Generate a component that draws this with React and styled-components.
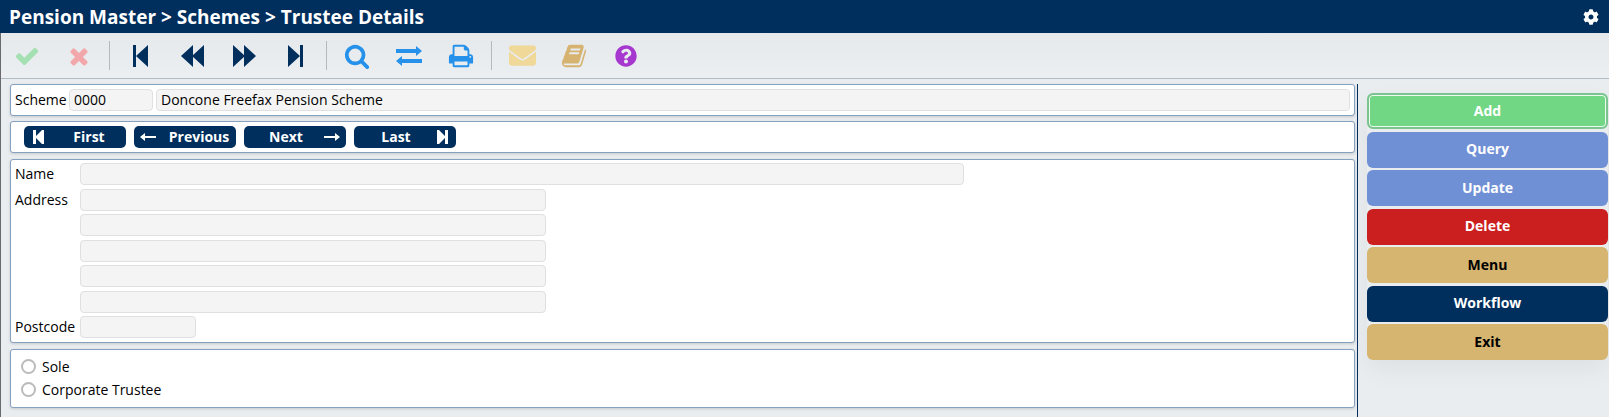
import React from "react";
import styled, { createGlobalStyle } from "styled-components";
import { FaCog, FaEnvelope, FaQuestionCircle } from "react-icons/fa";

const navy = "#002e5d";

const GlobalStyle = createGlobalStyle`
  *, *::before, *::after { box-sizing: border-box; }
  body { margin: 0; background: #e9edf0; color: #000; }
  body, button, input { font-family: "Open Sans", "Noto Sans", sans-serif; font-size: 14px; }
`;

const Page = styled.div`
  display: flex;
  flex-direction: column;
  min-height: 100vh;
`;

const Header = styled.header`
  display: flex;
  align-items: center;
  justify-content: space-between;
  height: 33px;
  padding: 0 10px 0 9px;
  background: ${navy};
  color: #fff;
`;

const Title = styled.h1`
  margin: 0;
  font-size: 19px;
  line-height: 24px;
  font-weight: 700;
`;

const IconButton = styled.button`
  display: flex;
  align-items: center;
  justify-content: center;
  width: ${(p) => p.$width}px;
  padding: 0;
  border: 0;
  background: none;
  color: ${(p) => p.$color};
  cursor: pointer;
`;

const Body = styled.div`
  flex: 1;
  display: flex;
  flex-direction: column;
  border-left: 1px solid #6a6a6c;
`;

const Toolbar = styled.div`
  display: flex;
  align-items: stretch;
  height: 46px;
  border-bottom: 1px solid #b3bcc3;
  background: linear-gradient(#e6e9eb, #ebeff2);
`;

const Divider = styled.span`
  width: 1px;
  margin: 8px 4px;
  background: #b5b9bc;
`;

const Columns = styled.div`
  flex: 1;
  display: flex;
  padding-top: 5px;
`;

const Main = styled.main`
  flex: 1;
  display: flex;
  flex-direction: column;
  gap: 6px;
  padding: 0 2px 8px 9px;
`;

const RecordBar = styled.div`
  display: flex;
  flex-direction: column;
  gap: 5px;
`;

const Panel = styled.section`
  display: flex;
  flex-direction: ${(p) => (p.$column ? "column" : "row")};
  align-items: ${(p) => (p.$column ? "stretch" : "center")};
  gap: ${(p) => p.$gap || 0}px;
  padding: ${(p) => p.$padding};
  border: 1px solid #86a0bf;
  border-radius: 3px;
  background: #fff;
  box-shadow: 0 1px 3px rgba(0, 0, 0, 0.15);
`;

const Label = styled.label`
  width: ${(p) => p.$width}px;
  line-height: 22px;
  white-space: nowrap;
`;

const Field = styled.input`
  width: ${(p) => (p.$width ? `${p.$width}px` : "auto")};
  flex: ${(p) => (p.$width ? "0 1 auto" : "1")};
  min-width: 0;
  height: ${(p) => p.$height || 22}px;
  padding: 0 4px 2px;
  border: 1px solid #e0e0e0;
  border-radius: 4px;
  background: #f4f4f4;
  color: #000;
`;

const NavButton = styled.button`
  display: flex;
  align-items: center;
  flex-direction: ${(p) => (p.$reverse ? "row-reverse" : "row")};
  gap: ${(p) => (p.$reverse ? 0 : 10)}px;
  width: 102px;
  height: 22px;
  padding: 0 5px;
  border: 0;
  border-radius: 5px;
  background: ${navy};
  color: #fff;
  font-weight: 700;
  cursor: pointer;
`;

const NavIcon = styled.span`
  display: flex;
  justify-content: center;
  width: 18px;
`;

const NavText = styled.span`
  flex: 1;
  display: flex;
  justify-content: center;
  line-height: 22px;
`;

const Form = styled.div`
  display: flex;
  flex-direction: column;
  justify-content: space-between;
  min-height: 175px;
`;

const FormRow = styled.div`
  display: flex;
  align-items: center;
`;

const Choice = styled.label`
  display: flex;
  align-items: center;
  gap: 6px;
  line-height: 23px;
`;

const Radio = styled.input`
  appearance: none;
  width: 15px;
  height: 15px;
  margin: 0;
  border: 2px solid #bbb;
  border-radius: 50%;
  background: #fff;

  &:checked { background: ${navy}; }
`;

const Sidebar = styled.aside`
  display: flex;
  flex-direction: column;
  width: 252px;
  padding: 9px 1px 0 9px;
  border-left: 1px solid ${navy};
`;

const Actions = styled.div`
  display: flex;
  flex-direction: column;
  justify-content: space-between;
  min-height: 267px;
  border-radius: 6px;
  box-shadow: 0 10px 24px rgba(0, 0, 0, 0.05);
`;

const ActionButton = styled.button`
  height: 36px;
  padding: 0 0 2px;
  border: ${(p) => (p.$active ? "2px solid #79c48f" : "0")};
  border-radius: 6px;
  background: ${(p) => p.$bg};
  color: ${(p) => p.$color || "#fff"};
  font-weight: 700;
  box-shadow: ${(p) => (p.$active ? "inset 0 0 0 1px #eefaf0" : "none")};
  cursor: pointer;
`;

const Glyph = ({ d, size = 26 }) => (
  <svg width={size} height={size} viewBox="0 0 1792 1792" fill="currentColor" aria-hidden="true">
    <path d={d} />
  </svg>
);

const CHECK = "M1671 566q0 40-28 68l-724 724-136 136q-28 28-68 28t-68-28l-136-136-362-362q-28-28-28-68t28-68l136-136q28-28 68-28t68 28l294 295 656-657q28-28 68-28t68 28l136 136q28 28 28 68z";
const TIMES = "M1490 1322q0 40-28 68l-136 136q-28 28-68 28t-68-28l-294-294-294 294q-28 28-68 28t-68-28l-136-136q-28-28-28-68t28-68l294-294-294-294q-28-28-28-68t28-68l136-136q28-28 68-28t68 28l294 294 294-294q28-28 68-28t68 28l136 136q28 28 28 68t-28 68l-294 294 294 294q28 28 28 68z";
const SEARCH = "M1216 832q0-185-131.5-316.5t-316.5-131.5-316.5 131.5-131.5 316.5 131.5 316.5 316.5 131.5 316.5-131.5 131.5-316.5zm512 832q0 52-38 90t-90 38q-54 0-90-38l-343-342q-179 124-399 124-143 0-273.5-55.5t-225-150-150-225-55.5-273.5 55.5-273.5 150-225 225-150 273.5-55.5 273.5 55.5 225 150 150 225 55.5 273.5q0 220-124 399l343 343q37 37 37 90z";
const PRINT = "M448 1536h896v-256h-896v256zM448 896h896v-384h-160q-40 0-68-28t-28-68v-160h-640v640zM1600 960q0-26-19-45t-45-19-45 19-19 45 19 45 45 19 45-19 19-45zM1728 960v416q0 13-9.5 22.5t-22.5 9.5h-224v160q0 40-28 68t-68 28h-960q-40 0-68-28t-28-68v-160h-224q-13 0-22.5-9.5t-9.5-22.5v-416q0-79 56.5-135.5t135.5-56.5h64v-544q0-40 28-68t68-28h672q40 0 88 20t76 48l152 152q28 28 48 76t20 88v256h64q79 0 135.5 56.5t56.5 135.5z";
const BOOK = "M1703 478q40 57 18 129l-275 906q-19 64-76.5 107.5t-122.5 43.5h-923q-77 0-148.5-53.5t-99.5-131.5q-24-67-2-127 0-4 3-27t4-37q1-8-3-21.5t-3-19.5q2-11 8-21t16.5-23.5 16.5-23.5q23-38 45-91.5t30-91.5q3-10 .5-30t-.5-28q3-11 17-28t17-23q21-36 42-92t25-90q1-9-2.5-32t.5-28q4-13 22-30.5t22-22.5q19-26 42.5-84.5t27.5-96.5q1-8-3-25.5t-2-26.5q2-8 9-18t18-23 17-21q8-12 16.5-30.5t15-35 16-36 19.5-32 26.5-23.5 36-11.5 47.5 5.5l-1 3q38-9 51-9h761q74 0 114 56t18 130l-274 906q-36 119-71.5 153.5t-128.5 34.5h-869q-27 0-38 15-11 16-1 43 24 70 144 70h923q29 0 56-15.5t35-41.5l300-987q7-22 5-57 38 15 59 43zm-1064 2q-4 13 2 22.5t20 9.5h608q13 0 25.5-9.5t16.5-22.5l21-64q4-13-2-22.5t-20-9.5h-608q-13 0-25.5 9.5t-16.5 22.5zm-83 256q-4 13 2 22.5t20 9.5h608q13 0 25.5-9.5t16.5-22.5l21-64q4-13-2-22.5t-20-9.5h-608q-13 0-25.5 9.5t-16.5 22.5z";

const Shape = ({ w, h, d }) => (
  <svg width={w} height={h} viewBox={`0 0 ${w} ${h}`} fill="currentColor" aria-hidden="true">
    <path d={d} />
  </svg>
);

const toolGroups = [
  [
    { label: "Accept", color: "#a5e0b3", icon: <Glyph d={CHECK} /> },
    { label: "Cancel", color: "#f2a8aa", icon: <Glyph d={TIMES} /> },
  ],
  [
    { label: "First record", color: navy, icon: <Shape w={16} h={22} d="M1 0h3v22h-3zM16 0v22L4 11z" /> },
    { label: "Back", color: navy, icon: <Shape w={23} h={22} d="M12 0v22L0 11zM23 0v22L11 11z" /> },
    { label: "Forward", color: navy, icon: <Shape w={23} h={22} d="M0 0v22L12 11zM11 0v22L23 11z" /> },
    { label: "Last record", color: navy, icon: <Shape w={16} h={22} d="M0 0v22L12 11zM12 0h3v22h-3z" /> },
  ],
  [
    { label: "Search", color: "#2591ea", icon: <Glyph d={SEARCH} /> },
    { label: "Switch", color: "#2591ea", icon: <Shape w={26} h={20} d="M0 3h20V0l6 5-6 5V7H0zM26 17H6v3l-6-5 6-5v3h20z" /> },
    { label: "Print", color: "#2591ea", icon: <Glyph d={PRINT} /> },
  ],
  [
    { label: "Mail", color: "#f0d898", icon: <FaEnvelope size={27} /> },
    { label: "Notes", color: "#d6b370", icon: <Glyph d={BOOK} /> },
    { label: "Help", color: "#a637cf", icon: <FaQuestionCircle size={22} /> },
  ],
];

const FIRST = "M0 0h3v6L9 0h2v14H9L3 8v6H0z";
const LAST = "M11 0H8v6L2 0H0v14h2l6-6v6h3z";
const LEFT = "M0 4l5-4v3h11v2H5v3z";
const RIGHT = "M16 4l-5-4v3H0v2h11v3z";

const navButtons = [
  { label: "First", icon: <Shape w={11} h={14} d={FIRST} /> },
  { label: "Previous", icon: <Shape w={16} h={8} d={LEFT} /> },
  { label: "Next", reverse: true, icon: <Shape w={16} h={8} d={RIGHT} /> },
  { label: "Last", reverse: true, icon: <Shape w={11} h={14} d={LAST} /> },
];

const formRows = [
  { id: "name", label: "Name", width: 884 },
  { id: "address1", label: "Address", width: 466 },
  { id: "address2", hidden: "Address line 2", width: 466 },
  { id: "address3", hidden: "Address line 3", width: 466 },
  { id: "address4", hidden: "Address line 4", width: 466 },
  { id: "address5", hidden: "Address line 5", width: 466 },
  { id: "postcode", label: "Postcode", width: 116 },
];

const actions = [
  { label: "Add", bg: "#72d785", active: true },
  { label: "Query", bg: "#7090d6" },
  { label: "Update", bg: "#7090d6" },
  { label: "Delete", bg: "#cb1e1e" },
  { label: "Menu", bg: "#d6b570", color: "#000" },
  { label: "Workflow", bg: navy },
  { label: "Exit", bg: "#d6b570", color: "#000" },
];

export default function App() {
  return (
    <Page>
      <GlobalStyle />
      <Header>
        <Title>Pension Master &gt; Schemes &gt; Trustee Details</Title>
        <IconButton $width={16} $color="#fff" aria-label="Settings">
          <FaCog size={16} />
        </IconButton>
      </Header>
      <Body>
        <Toolbar>
          {toolGroups.map((group, i) => (
            <React.Fragment key={i}>
              {i > 0 && <Divider />}
              {group.map((tool) => (
                <IconButton key={tool.label} $width={52} $color={tool.color} aria-label={tool.label}>
                  {tool.icon}
                </IconButton>
              ))}
            </React.Fragment>
          ))}
        </Toolbar>
        <Columns>
          <Main>
            <RecordBar>
              <Panel $padding="4px" $gap={3}>
                <Label htmlFor="scheme" $width={51}>Scheme</Label>
                <Field id="scheme" $width={84} defaultValue="0000" readOnly />
                <Field aria-label="Scheme name" defaultValue="Doncone Freefax Pension Scheme" readOnly />
              </Panel>
              <Panel $padding="4px 13px" $gap={8}>
                {navButtons.map((b) => (
                  <NavButton key={b.label} $reverse={b.reverse}>
                    <NavIcon>{b.icon}</NavIcon>
                    <NavText>{b.label}</NavText>
                  </NavButton>
                ))}
              </Panel>
            </RecordBar>
            <Panel $column $padding="3px 4px 4px">
              <Form>
                {formRows.map((row) => (
                  <FormRow key={row.id}>
                    <Label htmlFor={row.id} $width={65}>{row.label}</Label>
                    <Field id={row.id} $width={row.width} $height={22} aria-label={row.hidden} />
                  </FormRow>
                ))}
              </Form>
            </Panel>
            <Panel $column $padding="5px 10px 6px">
              <Choice><Radio type="radio" name="kind" />Sole</Choice>
              <Choice><Radio type="radio" name="kind" />Corporate Trustee</Choice>
            </Panel>
          </Main>
          <Sidebar>
            <Actions>
              {actions.map((a) => (
                <ActionButton key={a.label} $bg={a.bg} $color={a.color} $active={a.active}>
                  {a.label}
                </ActionButton>
              ))}
            </Actions>
          </Sidebar>
        </Columns>
      </Body>
    </Page>
  );
}
